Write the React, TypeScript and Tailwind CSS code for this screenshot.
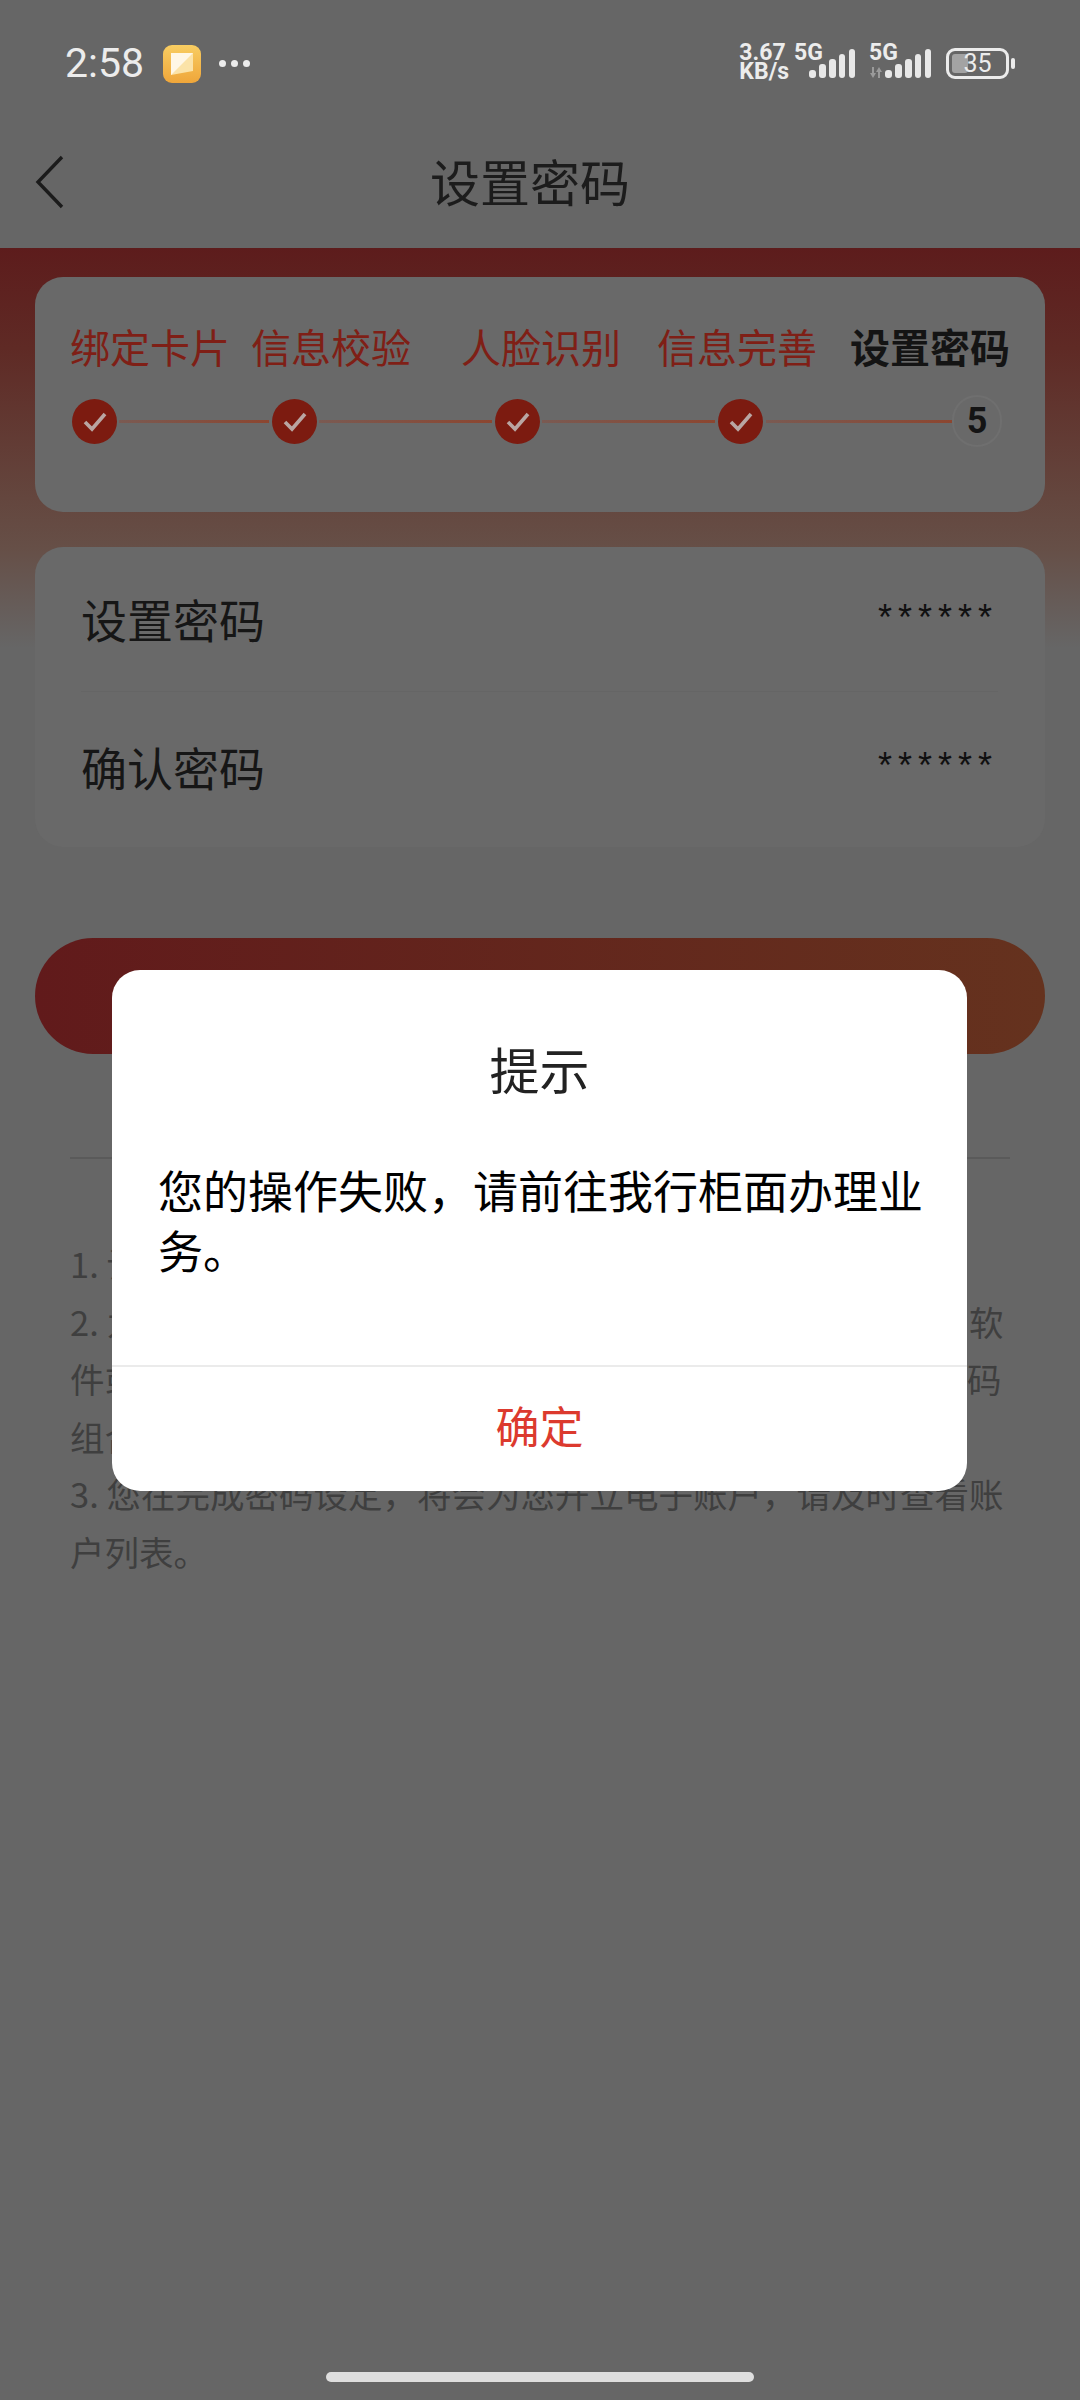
import React from 'react';

const CJK = 'font-["Noto_Sans_CJK_SC","Noto_Sans",sans-serif]';

const Check = () => (
    <svg width="45" height="45" viewBox="0 0 45 45" className="shrink-0">
        <circle cx="22.5" cy="22.5" r="22.5" fill="#7c1b10" />
        <path d="M13 23l7 7 13-15" fill="none" stroke="#b9a6a3" strokeWidth="3.6" />
    </svg>
);

const Line = ({ className }: { className: string }) => (
    <div className={`h-[3px] bg-[linear-gradient(to_right,#7a5a52,#8c4630)] ${className}`} />
);

const Signal = () => (
    <svg width="46" height="29" viewBox="0 0 46 29" fill="#e8e8e8">
        <rect x="0" y="21" width="7" height="8" rx="3" />
        <rect x="10" y="15" width="7" height="14" rx="3" />
        <rect x="20" y="10" width="7" height="19" rx="3" />
        <rect x="30" y="5" width="6" height="24" rx="3" />
        <rect x="40" y="0" width="6" height="29" rx="3" />
    </svg>
);

const StatusBar = () => (
    <div className='flex h-[126px] items-start justify-between pl-[65px] pr-[65px] pt-[43px] font-["Roboto",sans-serif] text-[#ececec]'>
        <div className="flex items-center">
            <span className="text-[41px] leading-[41px]">2:58</span>
            <svg width="38" height="38" viewBox="0 0 38 38" className="ml-[19px]">
                <defs>
                    <linearGradient id="note" x1="0" y1="0" x2="0" y2="1">
                        <stop offset="0" stopColor="#f8cd62" />
                        <stop offset="1" stopColor="#efa63a" />
                    </linearGradient>
                </defs>
                <rect width="38" height="38" rx="9" fill="url(#note)" />
                <path d="M8 8h22v18L8 30z" fill="#fbe3a8" />
                <path d="M8 30L8 8h22z" fill="#fff7e6" />
            </svg>
            <div className="ml-[18px] flex gap-[5px]">
                <span className="h-[7px] w-[7px] rounded-full bg-[#ececec]" />
                <span className="h-[7px] w-[7px] rounded-full bg-[#ececec]" />
                <span className="h-[7px] w-[7px] rounded-full bg-[#ececec]" />
            </div>
        </div>
        <div className="flex h-[40px] items-start">
            <div className="text-[23px] font-bold leading-[19px]">
                <div>3.67</div>
                <div>KB/s</div>
            </div>
            <div className="relative ml-[5px] w-[61px]">
                <span className="absolute left-0 top-0 text-[23px] font-bold leading-[19px]">5G</span>
                <div className="absolute left-[15px] top-[6px]">
                    <Signal />
                </div>
            </div>
            <div className="relative ml-[14px] w-[64px]">
                <span className="absolute left-0 top-0 text-[23px] font-bold leading-[19px]">5G</span>
                <svg width="14" height="11" viewBox="0 0 14 11" className="absolute left-0 top-[24px]" fill="#9a9a9a">
                    <path d="M3 0h2v6h2L4 11 1 6h2zM9 11h2V5h2l-3-5-3 5h2z" />
                </svg>
                <div className="absolute left-[16px] top-[6px]">
                    <Signal />
                </div>
            </div>
            <div className="ml-[13px] flex items-center pt-[5px]">
                <div className="relative h-[31px] w-[63px] overflow-hidden rounded-[9px] border-[3px] border-[#ececec]">
                    <div className="absolute bottom-[3px] left-[3px] top-[3px] w-[16px] rounded-[3px] bg-[#a3a3a3]" />
                    <span className="relative block text-center text-[25px] leading-[25px]">35</span>
                </div>
                <div className="ml-[2px] h-[11px] w-[4px] rounded-[2px] bg-[#ececec]" />
            </div>
        </div>
    </div>
);

const Dialog = () => (
    <div className={`absolute left-[112px] top-[970px] flex h-[521px] w-[855px] flex-col rounded-[28px] bg-white ${CJK}`}>
        <div className="pt-[69px] text-center text-[50px] leading-[58px] text-[#222]">提示</div>
        <p className="h-[268px] pl-[46px] pr-[40px] pt-[63px] text-[45px] leading-[60px] text-black">
            您的操作失败，请前往我行柜面办理业务。
        </p>
        <div className="h-[2px] bg-[#ebebeb]" />
        <div className="flex flex-1 items-center justify-center pb-[9px] text-[44px] text-[#dc3a2e]">确定</div>
    </div>
);

const App: React.FC = () => {
    return (
        <div className={`relative h-[2400px] w-[1080px] overflow-hidden bg-[#666666] ${CJK}`}>
            <StatusBar />

            <header className="relative flex h-[122px] items-center justify-center pb-[14px] pr-[20px]">
                <svg width="30" height="54" viewBox="0 0 30 54" className="absolute left-[35px] top-[29px]">
                    <path d="M27 2L3 27l24 25" fill="none" stroke="#1b1b1b" strokeWidth="3.4" />
                </svg>
                <h1 className="text-[50px] font-normal leading-[60px] text-[#1c1c1c]">设置密码</h1>
            </header>

            <main className="bg-[linear-gradient(to_bottom,#5d1c1c_0px,#5f2a25_100px,#64463e_250px,#664f47_300px,#666666_400px)] px-[35px] pt-[29px]">
                <section className="h-[235px] rounded-[28px] bg-[#696969] pl-[35px] pt-[44px]">
                    <div className="flex text-[40px] leading-[50px] text-[#7f1f16]">
                        <span className="w-[181px]">绑定卡片</span>
                        <span className="w-[210px]">信息校验</span>
                        <span className="w-[196px]">人脸识别</span>
                        <span className="w-[193px]">信息完善</span>
                        <span className="font-bold text-[#141414]">设置密码</span>
                    </div>
                    <div className="mt-[24px] flex items-center pl-[2px]">
                        <Check />
                        <Line className="ml-[2px] w-[150px]" />
                        <div className="ml-[3px]"><Check /></div>
                        <Line className="ml-[2px] w-[173px]" />
                        <div className="ml-[3px]"><Check /></div>
                        <Line className="ml-[2px] w-[173px]" />
                        <div className="ml-[3px]"><Check /></div>
                        <Line className="ml-[3px] w-[186px]" />
                        <div className='flex h-[52px] w-[50px] items-center justify-center rounded-full border-2 border-[#6f6f6f] font-["Roboto",sans-serif] text-[36px] font-bold text-[#141414]'>
                            5
                        </div>
                    </div>
                </section>

                <section className="mt-[35px] h-[300px] rounded-[28px] bg-[#696969] pl-[46px] pr-[47px]">
                    <div className="flex h-[145px] items-start justify-between border-b border-[#656565] pt-[48px]">
                        <span className="text-[46px] leading-[46px] text-[#161616]">设置密码</span>
                        <span className='pt-[5px] font-["Liberation_Sans",sans-serif] text-[36px] leading-[36px] tracking-[6px] text-[#101010]'>******</span>
                    </div>
                    <div className="flex items-start justify-between pt-[51px]">
                        <span className="text-[46px] leading-[46px] text-[#161616]">确认密码</span>
                        <span className='pt-[5px] font-["Liberation_Sans",sans-serif] text-[36px] leading-[36px] tracking-[6px] text-[#101010]'>******</span>
                    </div>
                </section>

                <div className="mt-[91px] h-[116px] rounded-full bg-[linear-gradient(to_right,#611a1b,#65321e)]" />

                <div className="mx-[35px] mt-[103px] h-[2px] bg-[#5a5a5a]" />

                <ol className="mx-[35px] mt-[76px] text-[34.5px] leading-[57.5px] text-[#3f3f3f]">
                    <li>1. 设置的密码将用于账户登录及交易</li>
                    <li>2. 为了您的账户安全，请使用复杂密码，请勿在来历不明的软件或网站中输入密码，建议您使用数字、字母和符号的强密码组合。</li>
                    <li>3. 您在完成密码设定，将会为您开立电子账户，请及时查看账户列表。</li>
                </ol>
            </main>

            <Dialog />

            <div className="absolute bottom-[18px] left-[326px] h-[10px] w-[428px] rounded-full bg-[#dedede]" />
        </div>
    );
};

export default App;
